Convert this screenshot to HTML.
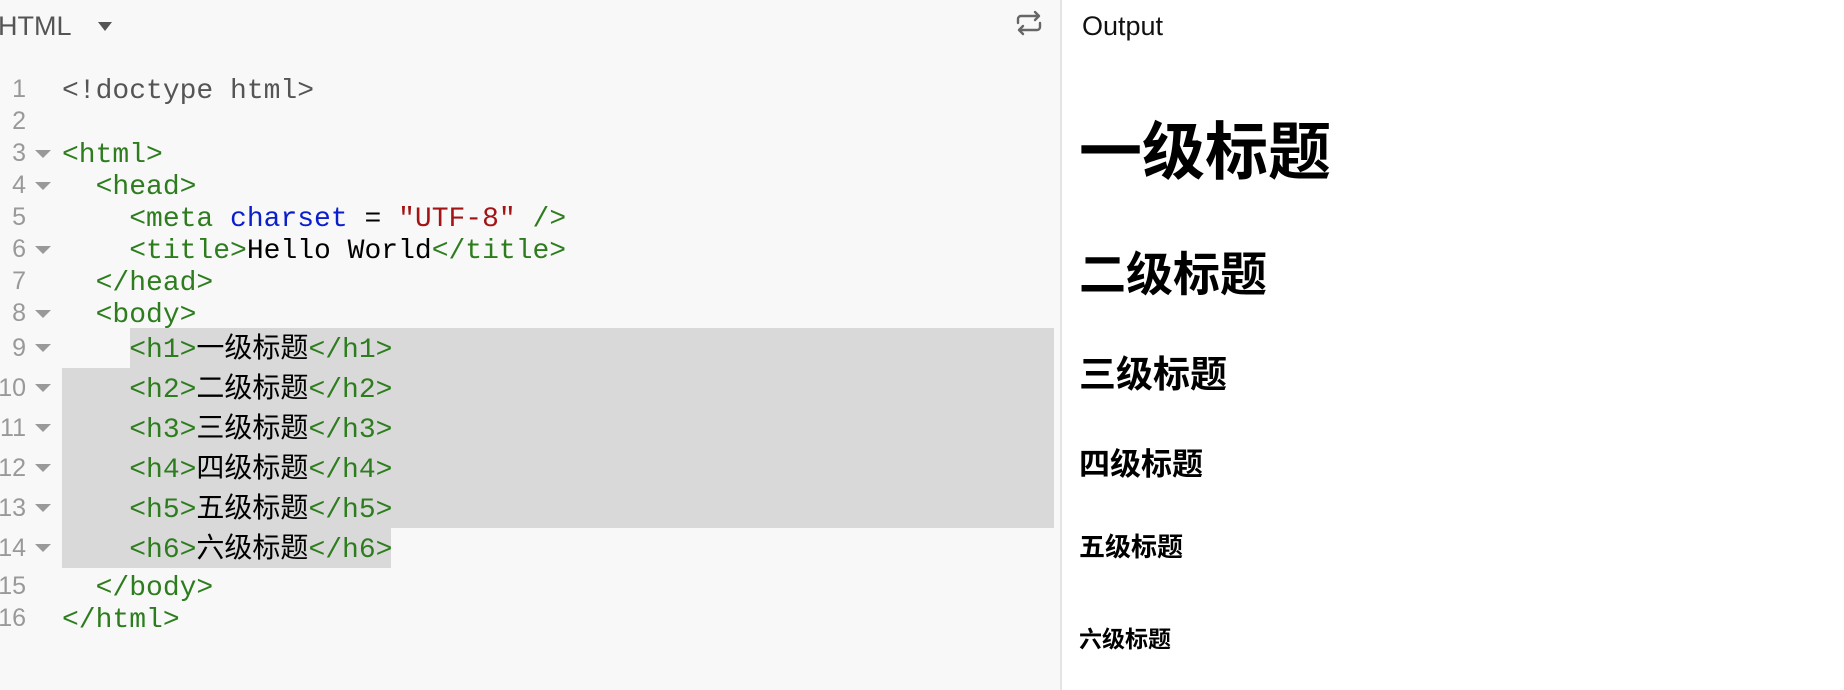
<!DOCTYPE html>
<html><head><meta charset="utf-8"><style>
body{margin:0;width:1844px;height:690px;position:relative;overflow:hidden;background:#fff;font-family:"Liberation Sans","Noto Sans CJK SC",sans-serif}
#left{position:absolute;left:0;top:0;width:1060px;height:690px;background:#f8f8f8}
#div{position:absolute;left:1060px;top:0;width:2px;height:690px;background:#e4e4e4}
.ln{position:absolute;left:0;width:26px;text-align:right;font-size:25px;color:#999;font-family:"Liberation Sans",sans-serif;line-height:32px;height:32px}
.fa{position:absolute;left:35px;width:0;height:0;border-left:8px solid transparent;border-right:8px solid transparent;border-top:8px solid #999}
.cd{position:absolute;left:62px;font-family:"Liberation Mono","Noto Sans CJK SC",monospace;font-size:28px;white-space:pre;color:#000;line-height:32px;height:32px;margin-top:3px}
.t .ln,.t .cd{line-height:40px;height:40px}
.g{color:#2d7d1e}.b{color:#0a1ecc}.r{color:#a31515}.d{color:#555}
.hl{position:absolute;background:#d9d9d9}
.h{position:absolute;left:1079px;font-family:"Liberation Sans","Noto Sans CJK SC",sans-serif;font-weight:700;line-height:1;color:#000;white-space:nowrap}
</style></head><body>
<div id="left"></div>
<div class="hl" style="left:130px;top:328px;width:924px;height:40px"></div>
<div class="hl" style="left:62px;top:368px;width:992px;height:160px"></div>
<div class="hl" style="left:62px;top:528px;width:329px;height:40px"></div>
<div id="div"></div>
<div style="position:absolute;left:-2px;top:11px;font-size:27px;color:#555">HTML</div>
<div style="position:absolute;left:98px;top:22px;width:0;height:0;border-left:7px solid transparent;border-right:7px solid transparent;border-top:9px solid #555"></div>
<svg style="position:absolute;left:1014px;top:8px" width="30" height="30" viewBox="0 0 30 30" fill="none" stroke="#666" stroke-width="2.4" stroke-linecap="round" stroke-linejoin="round"><path d="M4 15V11a3 3 0 0 1 3-3h18M21 4l4 4-4 4"/><path d="M26 15v4a3 3 0 0 1-3 3H5M9 26l-4-4 4-4"/></svg>
<div style="position:absolute;left:1082px;top:11px;font-size:27px;color:#111">Output</div>

<div class="ln" style="top:73px">1</div><div class="cd" style="top:73px"><span class="d">&lt;!doctype html&gt;</span></div>
<div class="ln" style="top:105px">2</div>
<div class="ln" style="top:137px">3</div><div class="fa" style="top:150px"></div><div class="cd g" style="top:137px">&lt;html&gt;</div>
<div class="ln" style="top:169px">4</div><div class="fa" style="top:182px"></div><div class="cd g" style="top:169px">  &lt;head&gt;</div>
<div class="ln" style="top:201px">5</div><div class="cd g" style="top:201px">    &lt;meta <span class="b">charset</span> <span style="color:#000">=</span> <span class="r">"UTF-8"</span> /&gt;</div>
<div class="ln" style="top:233px">6</div><div class="fa" style="top:246px"></div><div class="cd g" style="top:233px">    &lt;title&gt;<span style="color:#000">Hello World</span>&lt;/title&gt;</div>
<div class="ln" style="top:265px">7</div><div class="cd g" style="top:265px">  &lt;/head&gt;</div>
<div class="ln" style="top:297px">8</div><div class="fa" style="top:310px"></div><div class="cd g" style="top:297px">  &lt;body&gt;</div>
<div class="t">
<div class="ln" style="top:328px">9</div><div class="fa" style="top:344px"></div><div class="cd g" style="top:328px">    &lt;h1&gt;<span style="color:#000">一级标题</span>&lt;/h1&gt;</div>
<div class="ln" style="top:368px;left:-6px;width:32px">10</div><div class="fa" style="top:384px"></div><div class="cd g" style="top:368px">    &lt;h2&gt;<span style="color:#000">二级标题</span>&lt;/h2&gt;</div>
<div class="ln" style="top:408px;left:-6px;width:32px">11</div><div class="fa" style="top:424px"></div><div class="cd g" style="top:408px">    &lt;h3&gt;<span style="color:#000">三级标题</span>&lt;/h3&gt;</div>
<div class="ln" style="top:448px;left:-6px;width:32px">12</div><div class="fa" style="top:464px"></div><div class="cd g" style="top:448px">    &lt;h4&gt;<span style="color:#000">四级标题</span>&lt;/h4&gt;</div>
<div class="ln" style="top:488px;left:-6px;width:32px">13</div><div class="fa" style="top:504px"></div><div class="cd g" style="top:488px">    &lt;h5&gt;<span style="color:#000">五级标题</span>&lt;/h5&gt;</div>
<div class="ln" style="top:528px;left:-6px;width:32px">14</div><div class="fa" style="top:544px"></div><div class="cd g" style="top:528px">    &lt;h6&gt;<span style="color:#000">六级标题</span>&lt;/h6&gt;</div>
</div>
<div class="ln" style="top:570px;left:-6px;width:32px">15</div><div class="cd g" style="top:570px">  &lt;/body&gt;</div>
<div class="ln" style="top:602px;left:-6px;width:32px">16</div><div class="cd g" style="top:602px">&lt;/html&gt;</div>

<div class="h" style="top:122px;font-size:63px">一级标题</div>
<div class="h" style="top:251px;font-size:47px">二级标题</div>
<div class="h" style="top:356px;font-size:37px">三级标题</div>
<div class="h" style="top:449px;font-size:31px">四级标题</div>
<div class="h" style="top:534px;font-size:26px">五级标题</div>
<div class="h" style="top:628px;font-size:23px">六级标题</div>
</body></html>
